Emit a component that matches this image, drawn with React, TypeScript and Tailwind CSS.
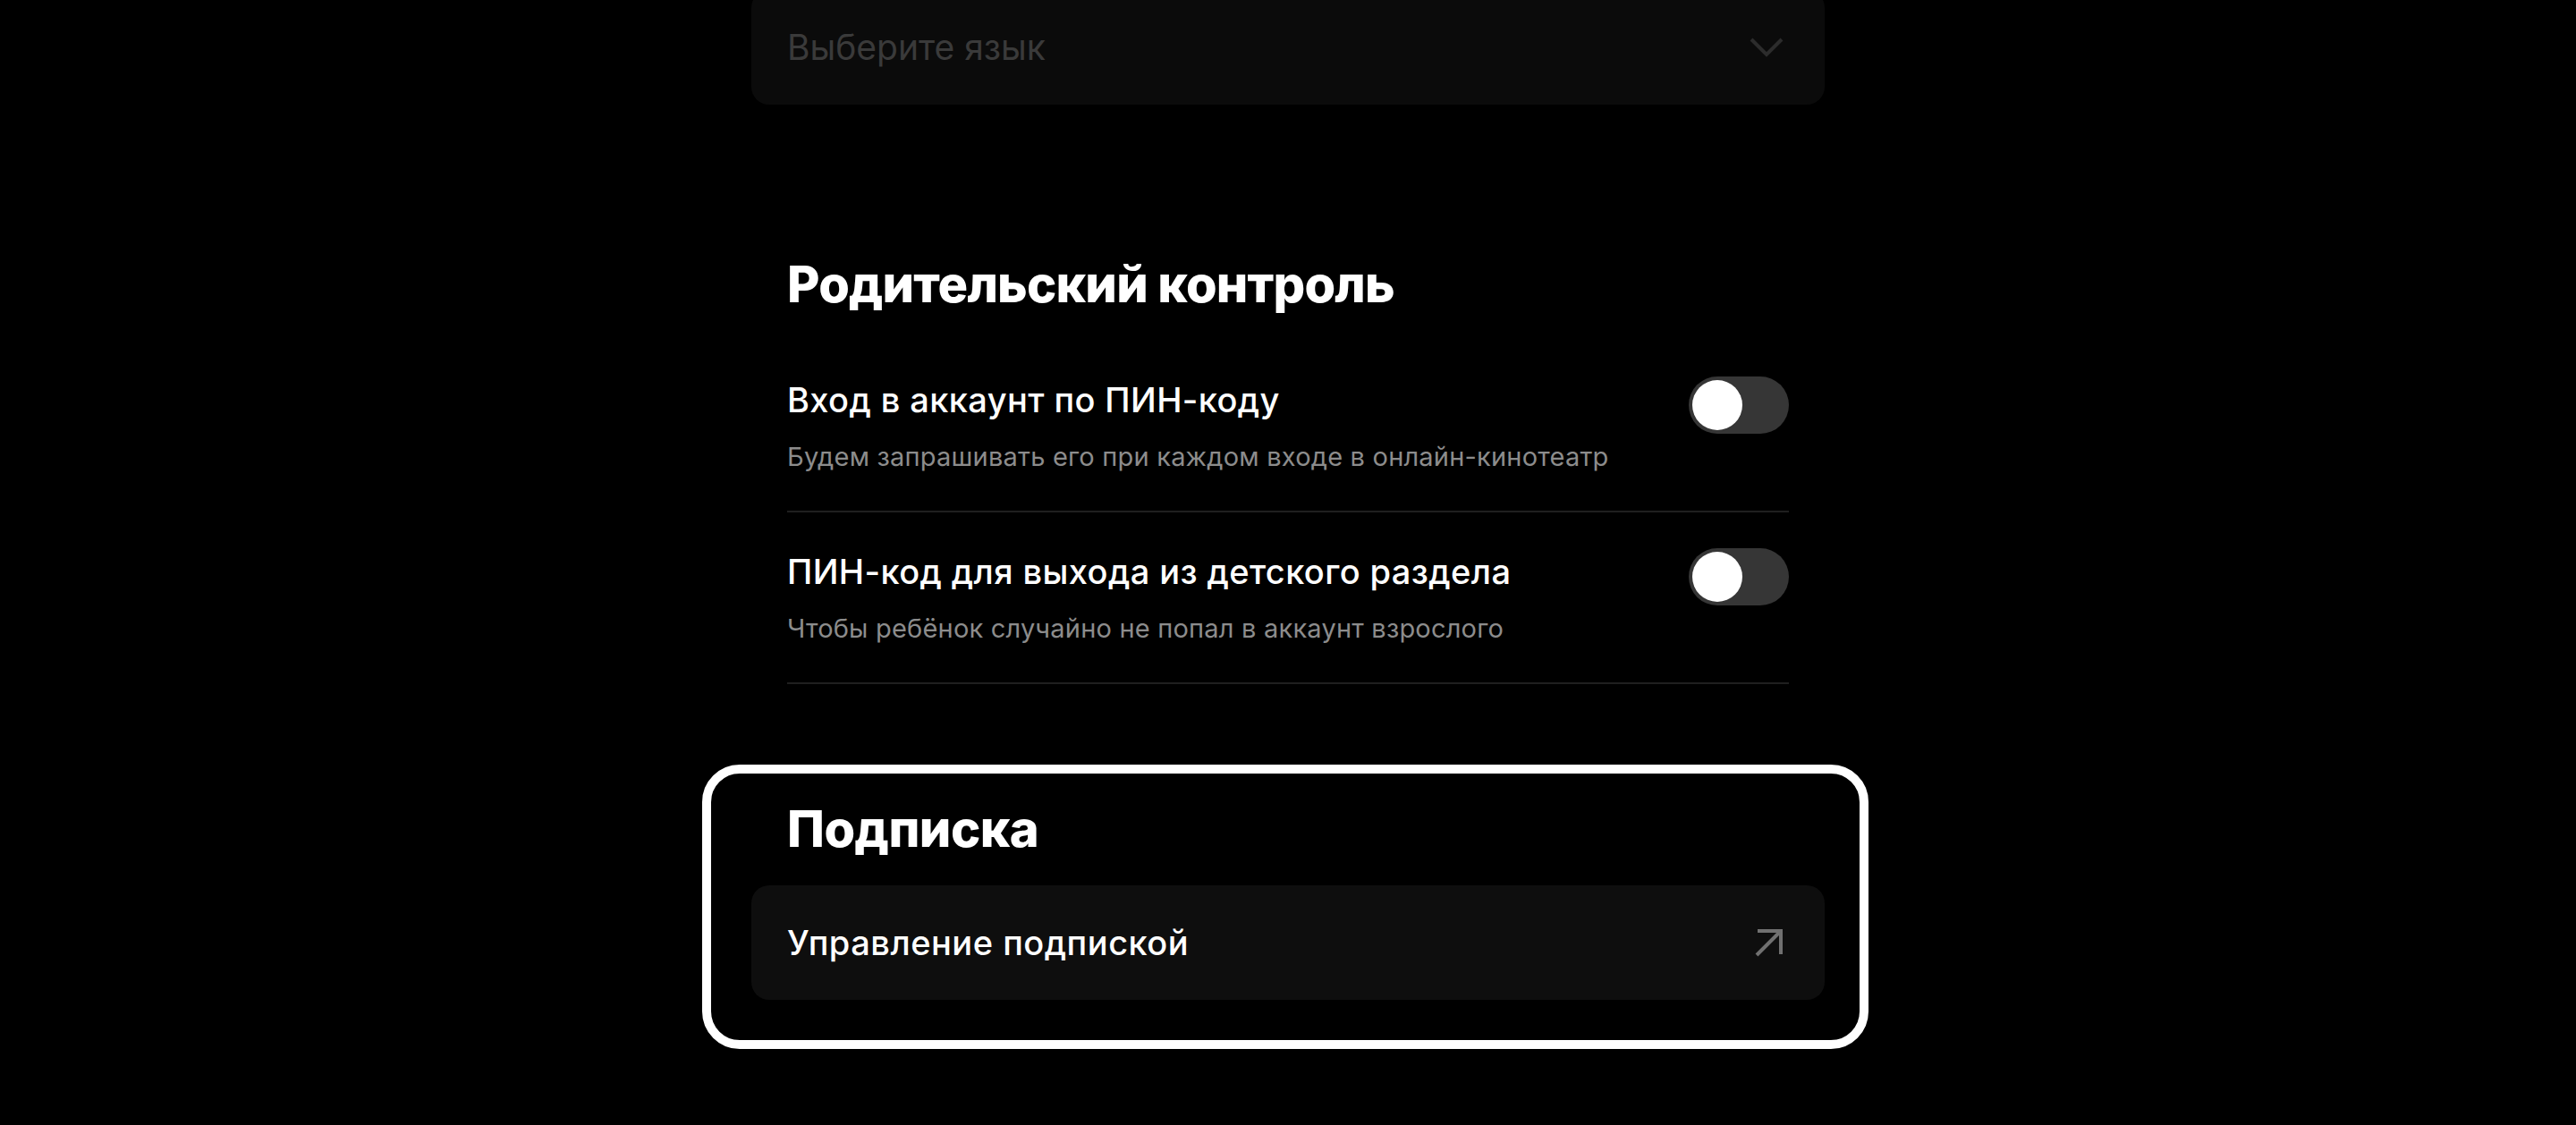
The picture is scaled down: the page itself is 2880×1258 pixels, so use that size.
import React from "react";

function Toggle() {
  return (
    <div className="-mt-[4px] flex h-[64px] w-[112px] shrink-0 items-center rounded-full bg-[#363636] p-[4px]">
      <div className="h-[56px] w-[56px] rounded-full bg-white" />
    </div>
  );
}

function Row({ title, subtitle }: { title: string; subtitle: string }) {
  return (
    <div className="flex items-start justify-between border-b-2 border-[#1f1f1f] pt-[44px] pb-[42px]">
      <div className="flex flex-col gap-[24px]">
        <div className="text-[38px] leading-[44px] font-medium tracking-[0.4px] text-white">{title}</div>
        <div className="text-[29px] leading-[36px] tracking-[0.2px] text-[#8c8c8c]">{subtitle}</div>
      </div>
      <Toggle />
    </div>
  );
}

export default function App() {
  return (
    <div className="h-[1258px] overflow-hidden bg-black font-[family-name:Inter,sans-serif] text-white">
      <div className="mx-auto flex w-[1200px] flex-col">
        <div className="-mt-[11px] flex h-[128px] items-center justify-between rounded-[20px] bg-[#0b0b0b] px-[40px]">
          <span className="text-[39px] leading-[48px] text-[#3a3a3a]">Выберите язык</span>
          <svg width="38" height="22" viewBox="0 0 38 22" fill="none" className="mr-[6px]">
            <path d="M2 2 L19 19 L36 2" stroke="#2c2c2c" strokeWidth="4" />
          </svg>
        </div>

        <section className="mt-[169px] px-[40px]">
          <h2 className="mb-[31px] text-[56px] leading-[64px] font-extrabold tracking-[-0.8px]">
            Родительский контроль
          </h2>
          <Row
            title="Вход в аккаунт по ПИН-коду"
            subtitle="Будем запрашивать его при каждом входе в онлайн-кинотеатр"
          />
          <Row
            title="ПИН-код для выхода из детского раздела"
            subtitle="Чтобы ребёнок случайно не попал в аккаунт взрослого"
          />
        </section>

        <section className="relative mt-[130px]">
          <div className="pointer-events-none absolute -top-[40px] -bottom-[55px] -left-[55px] -right-[49px] rounded-[42px] border-[10px] border-white" />
          <h2 className="mb-[31px] px-[40px] text-[56px] leading-[64px] font-extrabold tracking-[-0.5px]">
            Подписка
          </h2>
          <div className="flex h-[128px] items-center justify-between rounded-[20px] bg-[#0e0e0e] px-[40px]">
            <span className="text-[38px] leading-[44px] font-medium tracking-[0.5px] text-white">Управление подпиской</span>
            <svg width="32" height="32" viewBox="0 0 32 32" fill="none" className="mr-[6px]">
              <path d="M2 30 L29 3 M3 3 H29 V29" stroke="#707070" strokeWidth="4" />
            </svg>
          </div>
        </section>
      </div>
    </div>
  );
}
